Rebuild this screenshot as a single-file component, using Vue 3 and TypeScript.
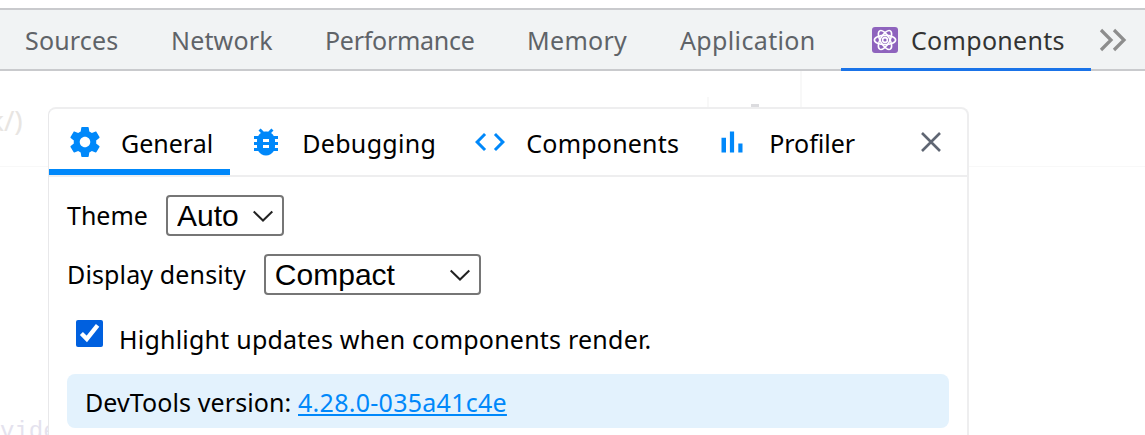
<script setup lang="ts">
interface DevtoolsTab {
  label: string
  width: number
  tracking: number
}

// widths follow the panel strip, tracking evens out the fallback font
const devtoolsTabs: DevtoolsTab[] = [
  { label: 'Sources', width: 146, tracking: 0.15 },
  { label: 'Network', width: 154, tracking: 0.15 },
  { label: 'Performance', width: 202, tracking: -0.27 },
  { label: 'Memory', width: 153, tracking: 0.3 },
  { label: 'Application', width: 161, tracking: 0.36 }
]

const settingsTabs = ['General', 'Debugging', 'Components', 'Profiler']
</script>

<template>
  <div class="page">
    <div class="tabbar">
      <span
        v-for="tab in devtoolsTabs"
        :key="tab.label"
        class="tool-tab"
        :style="{ width: `${tab.width}px`, letterSpacing: `${tab.tracking}px` }"
      >{{ tab.label }}</span>
      <span class="tool-tab tool-tab-active">
        <svg class="react-icon" viewBox="0 0 26 26" width="26" height="26">
          <rect width="26" height="26" rx="3" fill="#8e63bd" />
          <g fill="none" stroke="#fff" stroke-width="1.6">
            <ellipse cx="13" cy="13" rx="10.6" ry="4.6" />
            <ellipse cx="13" cy="13" rx="10.6" ry="4.6" transform="rotate(60 13 13)" />
            <ellipse cx="13" cy="13" rx="10.6" ry="4.6" transform="rotate(120 13 13)" />
          </g>
          <circle cx="13" cy="13" r="2.4" fill="none" stroke="#fff" stroke-width="1.6" />
        </svg>
        Components
      </span>
      <svg class="more-icon" viewBox="0 0 28 24" width="28" height="24">
        <path d="M2 2l10 10L2 22M15 2l10 10-10 10" fill="none" stroke="#8d8d8d" stroke-width="3.2" />
      </svg>
    </div>

    <div class="content">
      <div class="backdrop">
        <span class="ghost-code">k/)</span>
        <span class="ghost-rule" />
        <span class="ghost-col ghost-col-a" />
        <span class="ghost-col ghost-col-b" />
        <span class="ghost-tick" />
        <span class="ghost-vide">vide</span>
      </div>

      <div class="panel">
        <div class="panel-tabs">
          <div
            v-for="(tab, i) in settingsTabs"
            :key="tab"
            class="panel-tab"
            :class="[`panel-tab-${tab.toLowerCase()}`, { 'panel-tab-active': i === 0 }]"
          >
            <svg v-if="tab === 'General'" class="tab-icon" viewBox="0 0 24 24" width="36" height="36">
              <path d="M19.43 12.98c.04-.32.07-.64.07-.98s-.03-.66-.07-.98l2.11-1.65c.19-.15.24-.42.12-.64l-2-3.46c-.12-.22-.39-.3-.61-.22l-2.49 1c-.52-.4-1.08-.73-1.69-.98l-.38-2.65C14.46 2.18 14.25 2 14 2h-4c-.25 0-.46.18-.49.42l-.38 2.65c-.61.25-1.17.59-1.69.98l-2.49-1c-.23-.09-.49 0-.61.22l-2 3.46c-.13.22-.07.49.12.64l2.11 1.65c-.04.32-.07.65-.07.98s.03.66.07.98l-2.11 1.65c-.19.15-.24.42-.12.64l2 3.46c.12.22.39.3.61.22l2.49-1c.52.4 1.08.73 1.69.98l.38 2.65c.03.24.24.42.49.42h4c.25 0 .46-.18.49-.42l.38-2.65c.61-.25 1.17-.59 1.69-.98l2.49 1c.23.09.49 0 .61-.22l2-3.46c.12-.22.07-.49-.12-.64l-2.11-1.65zM12 15.5c-1.93 0-3.5-1.57-3.5-3.5s1.57-3.5 3.5-3.5 3.5 1.57 3.5 3.5-1.57 3.5-3.5 3.5z" />
            </svg>
            <svg v-else-if="tab === 'Debugging'" class="tab-icon" viewBox="0 0 24 24" width="36" height="36">
              <path d="M20 8h-2.81c-.45-.78-1.07-1.45-1.82-1.96L17 4.41 15.59 3l-2.17 2.17C12.96 5.06 12.49 5 12 5c-.49 0-.96.06-1.41.17L8.41 3 7 4.41l1.62 1.63C7.88 6.55 7.26 7.22 6.81 8H4v2h2.09c-.05.33-.09.66-.09 1v1H4v2h2v1c0 .34.04.67.09 1H4v2h2.81c1.04 1.79 2.97 3 5.19 3s4.15-1.21 5.19-3H20v-2h-2.09c.05-.33.09-.66.09-1v-1h2v-2h-2v-1c0-.34-.04-.67-.09-1H20V8zm-6 8h-4v-2h4v2zm0-4h-4v-2h4v2z" />
            </svg>
            <svg v-else-if="tab === 'Components'" class="tab-icon" viewBox="0 0 24 24" width="36" height="36">
              <path d="M9.4 16.6L4.8 12l4.6-4.6L8 6l-6 6 6 6 1.4-1.4zm5.2 0l4.6-4.6-4.6-4.6L16 6l6 6-6 6-1.4-1.4z" />
            </svg>
            <svg v-else class="tab-icon" viewBox="0 0 24 24" width="36" height="36">
              <path d="M5 9.2h3V19H5zM10.6 5h2.8v14h-2.8zm5.6 8H19v6h-2.8z" />
            </svg>
            <span class="panel-tab-text">{{ tab }}</span>
          </div>
          <svg class="close-icon" viewBox="0 0 24 24" width="24" height="24">
            <path d="M3 3l18 18M21 3L3 21" fill="none" stroke="#5f6673" stroke-width="2.6" />
          </svg>
        </div>

        <div class="panel-body">
          <div class="setting-row">
            <label class="setting-label">Theme</label>
            <div class="select-wrap select-theme">
              <select class="setting-select">
                <option>Auto</option>
              </select>
              <svg class="select-arrow" viewBox="0 0 20 12" width="20" height="12">
                <path d="M.7 1.5L10 10.5l9.3-9" fill="none" stroke="#222" stroke-width="2" />
              </svg>
            </div>
          </div>
          <div class="setting-row setting-row-density">
            <label class="setting-label">Display density</label>
            <div class="select-wrap select-density">
              <select class="setting-select">
                <option>Compact</option>
              </select>
              <svg class="select-arrow" viewBox="0 0 20 12" width="20" height="12">
                <path d="M.7 1.5L10 10.5l9.3-9" fill="none" stroke="#222" stroke-width="2" />
              </svg>
            </div>
          </div>
          <label class="setting-check">
            <input type="checkbox" checked />
            <span>Highlight updates when components render.</span>
          </label>
          <div class="version-box">
            DevTools version: <a class="version-link" href="#">4.28.0-035a41c4e</a>
          </div>
        </div>
      </div>
    </div>
  </div>
</template>

<style>
html,
body {
  margin: 0;
  overflow: hidden;
  background: #fff;
}
</style>

<style scoped>
.page {
  width: 1145px;
  height: 435px;
  overflow: hidden;
  padding-top: 8px;
  box-sizing: border-box;
  font-family: 'Noto Sans', 'Open Sans', sans-serif;
}

.tabbar {
  height: 59px;
  display: flex;
  align-items: stretch;
  background: #f1f3f4;
  border-top: 2px solid #c9cacd;
  border-bottom: 2px solid #c9cacd;
  padding-left: 25px;
}

.tool-tab {
  position: relative;
  display: flex;
  align-items: center;
  flex: none;
  font-size: 25px;
  color: #5f6368;
  white-space: nowrap;
}

.tool-tab-active {
  width: 250px;
  box-sizing: border-box;
  padding-left: 31px;
  color: #333;
  letter-spacing: 0.3px;
}

.tool-tab-active::after {
  content: '';
  position: absolute;
  left: 0;
  right: 0;
  bottom: -2px;
  height: 3px;
  background: #1a73e8;
}

.react-icon {
  margin-right: 13px;
}

.more-icon {
  flex: none;
  margin: 18px 0 0 8px;
}

.content {
  position: relative;
  height: 364px;
  padding: 36px 0 0 48px;
  box-sizing: border-box;
}

.backdrop {
  position: absolute;
  inset: 0;
}

.ghost-code {
  position: absolute;
  left: -11px;
  top: 30px;
  font-size: 28px;
  color: #e8e5e2;
}

.ghost-rule {
  position: absolute;
  left: 0;
  right: 0;
  top: 95px;
  height: 1px;
  background: #f8f8f8;
}

.ghost-col {
  position: absolute;
  width: 2px;
  background: #f8f8f8;
}

.ghost-col-a {
  left: 707px;
  top: 26px;
  height: 10px;
}

.ghost-col-b {
  left: 800px;
  top: 0;
  height: 36px;
}

.ghost-tick {
  position: absolute;
  left: 751px;
  top: 33px;
  width: 8px;
  height: 3px;
  background: #dcdcdf;
}

.ghost-vide {
  position: absolute;
  left: 0;
  top: 347px;
  font-family: 'Liberation Mono', monospace;
  font-size: 24px;
  color: #e4e2ee;
}

.panel {
  position: relative;
  width: 921px;
  height: 340px;
  box-sizing: border-box;
  background: #fff;
  border: 2px solid #eeeeef;
  border-left-width: 1px;
  border-left-color: #e8e8ea;
  border-radius: 8px 8px 0 0;
}

.panel-tabs {
  display: flex;
  align-items: stretch;
  height: 68px;
  box-sizing: border-box;
  border-bottom: 2px solid #eeeeef;
}

.panel-tab {
  display: flex;
  align-items: center;
  font-size: 25px;
  color: #000;
  padding: 5px 18px 0 18px;
  gap: 17px;
  box-sizing: border-box;
  border-bottom: 6px solid transparent;
}

.panel-tab-text {
  margin-top: 2px;
}

.panel-tab-general {
  gap: 18px;
  padding-right: 17px;
}

.panel-tab-debugging {
  gap: 18px;
  letter-spacing: 0.33px;
}

.panel-tab-components {
  gap: 18px;
  padding-right: 17px;
  letter-spacing: 0.2px;
}

.panel-tab-profiler {
  gap: 19px;
}

.panel-tab-active {
  border-bottom-color: #0088fa;
}

.tab-icon {
  fill: #0088fa;
  flex: none;
}

.close-icon {
  margin: 21px 24px 0 auto;
}

.panel-body {
  padding: 18px 18px 0;
}

.setting-row {
  display: flex;
  align-items: center;
  gap: 18px;
}

.setting-row-density {
  margin-top: 18px;
}

.setting-row-density .setting-label {
  letter-spacing: 0.13px;
}

.setting-label {
  padding-bottom: 2px;
  font-size: 25px;
  color: #000;
}

.select-wrap {
  position: relative;
  height: 41px;
}

.select-theme {
  width: 118px;
}

.select-density {
  width: 217px;
}

.setting-select {
  appearance: none;
  display: block;
  width: 100%;
  height: 100%;
  padding: 0 0 0 9px;
  font-family: 'Liberation Sans', Arial, sans-serif;
  font-size: 30px;
  color: #000;
  background: #fff;
  border: 2px solid #767676;
  border-radius: 4px;
}

.select-arrow {
  position: absolute;
  right: 11px;
  top: 15px;
  pointer-events: none;
}

.setting-check {
  display: flex;
  align-items: flex-start;
  margin: 25px 0 0 9px;
  font-size: 25px;
  color: #000;
  letter-spacing: 0.22px;
}

.setting-check span {
  margin-top: 2px;
  margin-left: -1px;
}

.setting-check input {
  flex: none;
  width: 27px;
  height: 27px;
  margin: 0 17px 0 0;
  accent-color: #0060df;
}

.version-box {
  margin-top: 18px;
  height: 54px;
  line-height: 56px;
  padding: 0 18px;
  font-size: 25px;
  color: #000;
  background: #e3f2fd;
  border-radius: 8px;
  letter-spacing: 0.1px;
}

.version-link {
  color: #0088fa;
  letter-spacing: 0.27px;
}
</style>
